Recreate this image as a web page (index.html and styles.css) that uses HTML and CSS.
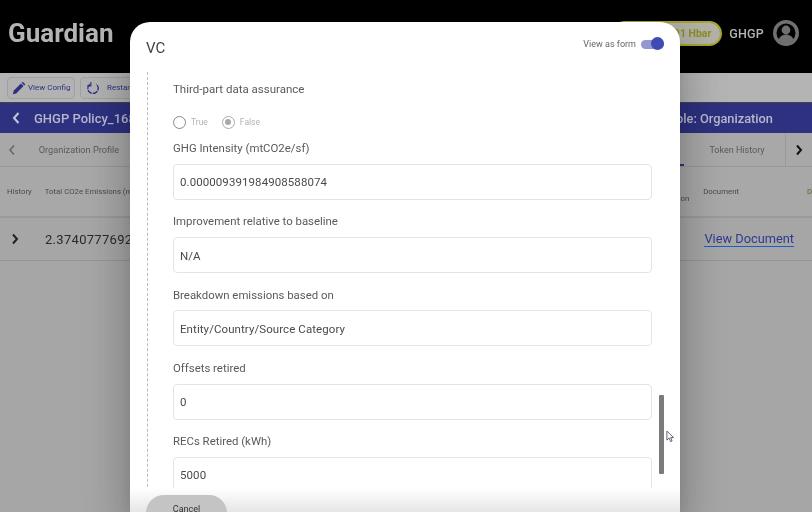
FILE: index.html
```html
<!DOCTYPE html>
<html lang="en">
<head>
<meta charset="utf-8">
<title>Guardian</title>
<link rel="stylesheet" href="styles.css">
</head>
<body>
<div class="app">
  <header class="topbar">
    <div class="brand">Guardian</div>
    <div class="account">
      <span class="balance">0.91 Hbar</span>
      <span class="user">GHGP</span>
      <svg class="avatar" viewBox="0 0 26 26"><circle cx="13" cy="13" r="11.250" fill="none" stroke="#707070" stroke-width="3.500"/><circle cx="13" cy="10" r="4.400" fill="#707070"/><path d="M5.500 19.500c1.500-3.600 4.600-5 7.500-5s6 1.400 7.500 5c-2 2.200-4.600 3.500-7.500 3.500s-5.500-1.300-7.500-3.500z" fill="#707070"/></svg>
    </div>
  </header>
  <div class="toolbar">
    <button class="tool tool-config">
      <svg class="tool-icon" viewBox="0 0 16 16"><path d="M1 15l.8-3.800 8.400-8.400 3 3-8.400 8.400zM11 2l1.200-1.200 3 3L14 5z" fill="#2d3180"/></svg>
      <span>View Config</span>
    </button>
    <button class="tool tool-restart">
      <svg class="tool-icon" viewBox="0 0 16 16"><path d="M4.200 3.600a6 6 0 1 0 7.600 0" fill="none" stroke="#2d3180" stroke-width="1.500" stroke-dasharray="6 1"/><path d="M5.500 1v4.500H1.500" fill="none" stroke="#2d3180" stroke-width="1.300"/></svg>
      <span>Restart</span>
    </button>
  </div>
  <div class="policybar">
    <svg class="back" viewBox="0 0 10 14"><path d="M7.500 2L3 7l4.500 5" fill="none" stroke="#c8c8d4" stroke-width="2"/></svg>
    <span class="policy-name">GHGP Policy_1687</span>
    <span class="role">Role: Organization</span>
  </div>
  <nav class="tabs">
    <div class="tab-arrow">
      <svg class="chev" viewBox="0 0 10 14"><path d="M7 2.500L3 7l4 4.500" fill="none" stroke="#666" stroke-width="1.500"/></svg>
    </div>
    <div class="tab tab-org">Organization Profile</div>
    <div class="tab-fill"></div>
    <div class="tab-active"></div>
    <div class="tab tab-token">Token History</div>
    <div class="tab-arrow tab-arrow-right">
      <svg class="chev" viewBox="0 0 10 14"><path d="M3 2.500L7 7l-4 4.500" fill="none" stroke="#111" stroke-width="2"/></svg>
    </div>
  </nav>
  <div class="thead">
    <span class="th th-history">History</span>
    <span class="th th-total">Total CO2e Emissions (mtCO2e)</span>
    <span class="th th-two">Total<br>Conversion</span>
    <span class="th th-doc">Document</span>
    <span class="th th-next">Date</span>
  </div>
  <div class="trow">
    <svg class="row-chev" viewBox="0 0 10 14"><path d="M3 2.500L7 7l-4 4.500" fill="none" stroke="#222" stroke-width="2"/></svg>
    <span class="td-total">2.37407776923</span>
    <a class="doc-link" href="#">View Document</a>
  </div>
  <div class="rest"></div>
</div>

<section class="modal">
  <div class="modal-head">
    <h1 class="modal-title">VC</h1>
    <div class="view-toggle">
      <span>View as form</span>
      <span class="switch"><span class="knob"></span></span>
    </div>
  </div>
  <div class="modal-body">
    <div class="form">
      <div class="question">Third-part data assurance</div>
      <div class="radios">
        <span class="radio"></span><span class="radio-label">True</span>
        <span class="radio radio-on"></span><span class="radio-label">False</span>
      </div>
      <div class="field field-first">
        <label class="label">GHG Intensity (mtCO2e/sf)</label>
        <div class="input">0.000009391984908588074</div>
      </div>
      <div class="field">
        <label class="label">Improvement relative to baseline</label>
        <div class="input">N/A</div>
      </div>
      <div class="field">
        <label class="label">Breakdown emissions based on</label>
        <div class="input">Entity/Country/Source Category</div>
      </div>
      <div class="field">
        <label class="label">Offsets retired</label>
        <div class="input">0</div>
      </div>
      <div class="field">
        <label class="label">RECs Retired (kWh)</label>
        <div class="input">5000</div>
      </div>
    </div>
    <div class="scrollbar"></div>
  </div>
  <div class="modal-foot">
    <button class="cancel">Cancel</button>
  </div>
</section>

<svg class="cursor" viewBox="0 0 10 14"><path d="M1 1v10l2.500-2.300 1.700 4 1.600-.7-1.700-3.800H8.500z" fill="#fff" stroke="#55556a" stroke-width="1"/></svg>
</body>
</html>
```
FILE: styles.css
```css
* { box-sizing: border-box; }
html, body { margin: 0; height: 100%; overflow: hidden; }
body { font-family: Roboto, "Liberation Sans", sans-serif; background: #a6a6a6; color: #333; width: 812px; height: 512px; position: relative; filter: blur(.4px); }
button { font-family: inherit; }

.app { display: flex; flex-direction: column; height: 512px; }

.topbar { flex: 0 0 73px; background: #000; display: flex; justify-content: space-between; align-items: center; padding: 0 13px 7px 8px; }
.brand { font-size: 26px; font-weight: 700; color: #b4b4b4; }
.account { display: flex; align-items: center; }
.balance { height: 25px; width: 110px; margin-right: 7px; border: 2px solid #a8a42c; border-radius: 13px; background: #b2b2a8; color: #8f8d22; font-size: 10.500px; font-weight: 700; display: flex; align-items: center; justify-content: flex-end; padding-right: 9px; white-space: nowrap; }
.user { color: #b4b4b4; font-size: 12.500px; font-weight: 500; margin-right: 9px; letter-spacing: .2px; }
.avatar { width: 26px; height: 26px; display: block; }

.toolbar { flex: 0 0 30px; background: #b4b4b4; border-bottom: 1px solid #444; display: flex; align-items: center; gap: 5px; padding: 0 0 0 7px; }
.tool { height: 22px; background: #b2b2b2; border: 1px solid #a0a0a0; border-radius: 4px; display: flex; align-items: center; gap: 2px; padding: 0 0 0 4px; color: #2d3180; font-size: 8px; white-space: nowrap; }
.tool-config { width: 68px; }
.tool-restart { width: 90px; gap: 7px; padding-left: 5px; }
.tool-icon { width: 14px; height: 14px; flex: none; }

.policybar { flex: 0 0 30px; background: #2d3180; color: #b8b8cc; display: flex; align-items: center; padding: 0 39px 0 11px; font-size: 13px; font-weight: 500; }
.back { width: 10px; height: 14px; margin-right: 13px; }
.role { margin-left: auto; font-size: 12.800px; }

.tabs { flex: 0 0 34px; background: #a8a8a8; display: flex; align-items: center; color: #5a5a5a; font-size: 9.200px; border-bottom: 1px solid #999; }
.tab-arrow { width: 24px; height: 100%; display: flex; align-items: center; justify-content: center; }
.tab-arrow-right { width: 27px; border-left: 1px solid #999; }
.chev { width: 10px; height: 14px; }
.tab { text-align: center; }
.tab-org { width: 110px; }
.tab-fill { flex: 1; }
.tab-active { align-self: flex-end; width: 6px; height: 2px; background: #2d3180; margin-right: 5px; }
.tab-token { width: 96px; font-size: 9px; }

.thead { flex: 0 0 51px; background: #a8a8a8; border-bottom: 2px solid #9a9a9a; display: flex; align-items: center; font-size: 7.800px; color: #4a4a4a; padding-left: 7px; overflow: hidden; white-space: nowrap; }
.th-total { margin-left: 13px; }
.th-two { margin-left: auto; text-align: center; line-height: 14px; }
.th-doc { margin-left: 14px; }
.th-next { margin-left: 68px; width: 5px; overflow: hidden; color: #6a5a30; }

.trow { flex: 0 0 43px; background: #a6a6a6; border-bottom: 1px solid #969696; display: flex; align-items: center; padding-left: 10px; }
.row-chev { width: 10px; height: 14px; margin-right: 25px; }
.td-total { font-size: 13px; color: #2a2a2a; letter-spacing: .3px; }
.doc-link { margin-left: auto; margin-right: 18px; color: #2d3a90; font-size: 12.800px; text-decoration: none; border-bottom: 1px solid #1c5fc0; line-height: 15px; }
.rest { flex: 1; background: #a6a6a6; }

.modal { position: absolute; left: 130px; top: 22px; width: 550px; height: 490px; background: #fff; border-radius: 20px 20px 0 0; box-shadow: 0 11px 15px -7px rgba(0,0,0,.2), 0 24px 38px 3px rgba(0,0,0,.14), 0 9px 46px 8px rgba(0,0,0,.12); display: flex; flex-direction: column; overflow: hidden; }
.modal-head { flex: 0 0 50px; display: flex; justify-content: space-between; align-items: center; padding: 0 16px 4px 16px; }
.modal-title { margin: 0; font-size: 15px; font-weight: 400; color: #444; position: relative; top: 3px; }
.view-toggle { display: flex; align-items: center; gap: 5px; font-size: 9px; color: #666; position: relative; top: -1px; }
.switch { width: 23px; height: 9px; border-radius: 5px; background: #9298d2; position: relative; display: block; }
.knob { position: absolute; right: 0; top: -2.500px; width: 13px; height: 13px; border-radius: 50%; background: #3f4ab5; }

.modal-body { flex: 1; position: relative; min-height: 0; overflow: hidden; }
.form { margin-left: 17px; border-left: 1px dashed #bbb; padding: 10px 28px 0 25px; height: 100%; overflow: hidden; }
.question { font-size: 11.500px; line-height: 14px; color: #5a5a5a; }
.radios { display: flex; align-items: center; margin-top: 19px; height: 14px; }
.radio { width: 13px; height: 13px; border: 1px solid #888; border-radius: 50%; flex: none; }
.radio-on { border-color: #aaa; margin-left: 14px; position: relative; }
.radio-on::after { content: ""; position: absolute; inset: 2.500px; border-radius: 50%; background: #a8a8a8; }
.radio-label { font-size: 8.500px; color: #b4b4b4; margin-left: 5px; }
.field { margin-top: 14.500px; }
.field-first { margin-top: 12px; }
.label { display: block; font-size: 11.400px; line-height: 14px; color: #5a5a5a; }
.input { height: 36px; margin-top: 8.800px; padding-top: 1px; border: 1px solid #e4e4e4; border-radius: 4px; display: flex; align-items: center; padding-left: 6px; font-size: 11.500px; color: #4a4a4a; letter-spacing: .08px; }
.scrollbar { position: absolute; left: 529px; top: 323px; width: 5px; height: 79px; background: #7b7b7b; border-radius: 1px; }

.modal-foot { position: absolute; left: 0; right: 0; bottom: 0; height: 24px; background: linear-gradient(#ffffff, #e6e6e6); padding-left: 16px; overflow: hidden; }
.cancel { width: 81px; height: 36px; margin-top: 7px; border: 0; border-radius: 18px; background: #c4c4c4; color: #333; font-size: 9px; padding: 0 0 9px; display: block; }
.cursor { position: absolute; left: 666px; top: 430px; width: 9px; height: 13px; }
```
